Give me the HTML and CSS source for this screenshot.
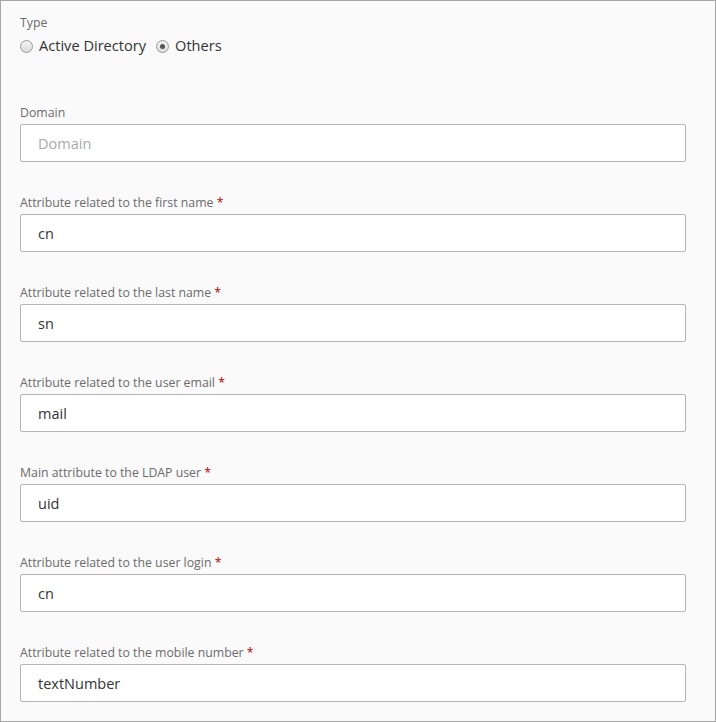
FILE: index.html
```html
<!DOCTYPE html>
<html>
<head>
<meta charset="utf-8">
<link rel="stylesheet" href="styles.css">
</head>
<body>
<div class="panel">
  <div class="type-group">
    <div class="label">Type</div>
    <div class="radios">
      <label class="radio"><span class="radio-dot"></span>Active Directory</label>
      <label class="radio"><span class="radio-dot checked"></span>Others</label>
    </div>
  </div>
  <div class="fields">
    <div class="field">
      <div class="label">Domain</div>
      <div class="input placeholder">Domain</div>
    </div>
    <div class="field">
      <div class="label">Attribute related to the first name <span class="req">*</span></div>
      <div class="input">cn</div>
    </div>
    <div class="field">
      <div class="label">Attribute related to the last name <span class="req">*</span></div>
      <div class="input">sn</div>
    </div>
    <div class="field">
      <div class="label">Attribute related to the user email <span class="req">*</span></div>
      <div class="input">mail</div>
    </div>
    <div class="field">
      <div class="label">Main attribute to the LDAP user <span class="req">*</span></div>
      <div class="input">uid</div>
    </div>
    <div class="field">
      <div class="label">Attribute related to the user login <span class="req">*</span></div>
      <div class="input">cn</div>
    </div>
    <div class="field">
      <div class="label">Attribute related to the mobile number <span class="req">*</span></div>
      <div class="input">textNumber</div>
    </div>
  </div>
</div>
</body>
</html>
```
FILE: styles.css
```css
html, body {
  margin: 0;
  padding: 0;
  background: #ffffff;
}
.panel {
  box-sizing: border-box;
  width: 716px;
  height: 722px;
  border: 1px solid #a6a6a6;
  background: #fafafa;
  padding: 14px 29px 19px 19px;
  font-family: "Open Sans", "Liberation Sans", sans-serif;
  color: #333;
}
.label {
  font-size: 12.3px;
  line-height: 16px;
  color: #6b6b6b;
  margin-bottom: 3px;
}
.type-group .label {
  margin-bottom: 4px;
}
.req {
  color: #b00000;
}
.radios {
  display: flex;
  align-items: center;
  height: 20px;
  font-size: 14.6px;
  line-height: 20px;
  color: #333;
}
.radio {
  display: flex;
  align-items: center;
  margin-right: 10px;
}
.radio-dot {
  box-sizing: border-box;
  width: 13px;
  height: 13px;
  border-radius: 50%;
  border: 1px solid #9a9a9a;
  background: linear-gradient(#f4f4f4, #dcdcdc);
  margin-right: 6px;
  position: relative;
  top: 1px;
}
.radio-dot.checked::after {
  content: "";
  position: absolute;
  left: 3px;
  top: 3px;
  width: 5px;
  height: 5px;
  border-radius: 50%;
  background: #555;
}
.fields {
  margin-top: 50px;
  display: flex;
  flex-direction: column;
  gap: 33px;
}
.input {
  box-sizing: border-box;
  height: 38px;
  border: 1px solid #b5b5b5;
  border-radius: 2px;
  background: #fff;
  padding: 2px 17px 0;
  font-size: 14.5px;
  line-height: 34px;
  color: #333;
}
.input.placeholder {
  color: #aaa;
}
```
